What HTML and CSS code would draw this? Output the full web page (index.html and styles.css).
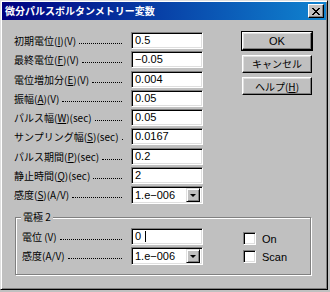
FILE: index.html
```html
<!DOCTYPE html>
<html lang="ja">
<head>
<meta charset="utf-8">
<title>微分パルスボルタンメトリー変数</title>
<link rel="stylesheet" href="styles.css">
</head>
<body>
<div class="window">
	<div class="titlebar">
		<span class="title">微分パルスボルタンメトリー変数</span>
		<span class="close"><svg width="8" height="7" viewBox="0 0 8 7"><path d="M0 0L7 7M1 0L8 7M7 0L0 7M8 0L1 7" stroke="#000" stroke-width="1"/></svg></span>
	</div>
	<div class="main">
		<div class="params">
			<label class="lbl"><span>初期電位(<u>I</u>)(V)</span><span class="dots"></span></label>
			<div class="field">0.5</div>
			<label class="lbl"><span>最終電位(<u>F</u>)(V)</span><span class="dots"></span></label>
			<div class="field">−0.05</div>
			<label class="lbl"><span>電位増加分(<u>E</u>)(V)</span><span class="dots"></span></label>
			<div class="field">0.004</div>
			<label class="lbl"><span>振幅(<u>A</u>)(V)</span><span class="dots"></span></label>
			<div class="field">0.05</div>
			<label class="lbl"><span>パルス幅(<u>W</u>)(sec)</span><span class="dots"></span></label>
			<div class="field">0.05</div>
			<label class="lbl"><span>サンプリング幅(<u>S</u>)(sec)</span><span class="dots"></span></label>
			<div class="field">0.0167</div>
			<label class="lbl"><span>パルス期間(<u>P</u>)(sec)</span><span class="dots"></span></label>
			<div class="field">0.2</div>
			<label class="lbl"><span>静止時間(<u>Q</u>)(sec)</span><span class="dots"></span></label>
			<div class="field">2</div>
			<label class="lbl"><span>感度(<u>S</u>)(A/V)</span><span class="dots"></span></label>
			<div class="combo"><span>1.e−006</span><span class="drop"><i class="arrow"></i></span></div>
		</div>
		<div class="buttons">
			<button class="btn default">OK</button>
			<button class="btn">キャンセル</button>
			<button class="btn">ヘルプ(<u>H</u>)</button>
		</div>
	</div>
	<div class="group">
		<span class="legend">電極 2</span>
		<div class="params small">
			<label class="lbl"><span>電位 (V)</span><span class="dots"></span></label>
			<div class="field">0 <i class="caret"></i></div>
			<label class="lbl"><span>感度(A/V)</span><span class="dots"></span></label>
			<div class="combo"><span>1.e−006</span><span class="drop"><i class="arrow"></i></span></div>
		</div>
		<div class="checks">
			<label class="check"><span class="box"></span>On</label>
			<label class="check"><span class="box"></span>Scan</label>
		</div>
	</div>
</div>
</body>
</html>
```

FILE: styles.css
```css
body { margin: 0; background: #c0c0c0; font-family: "Noto Sans CJK JP", sans-serif; font-size: 10px; color: #000; }

u { text-decoration: underline; text-underline-offset: 1px; }

.window { width: 328px; height: 290px; box-sizing: border-box; background: #c0c0c0; border: 1px solid; border-color: #dfdfdf #000 #000 #dfdfdf; box-shadow: inset 1px 1px #fff, inset -1px -1px #808080; padding: 1px; }

.titlebar { height: 18px; display: flex; align-items: center; justify-content: space-between; padding: 0 2px 0 3px; background: linear-gradient(to right, #000080, #1084d0); }

.title { color: #fff; font-weight: bold; font-size: 10px; line-height: 18px; }

.close { width: 14px; height: 12px; display: flex; align-items: center; justify-content: center; background: #c0c0c0; border: 1px solid; border-color: #fff #000 #000 #fff; box-shadow: inset -1px -1px #808080; }

.main { display: flex; padding: 12px 0 0 12px; }

.params { display: grid; grid-template-columns: 117px 72px; grid-auto-rows: 19.25px; }

.lbl { display: flex; align-items: center; padding-right: 9px; height: 17px; white-space: nowrap; }

.dots { flex: 1; height: 0; border-bottom: 1px dotted #000; margin: 6px 0 0 3px; }

.field, .combo { height: 17px; box-sizing: border-box; background: #fff; border: 1px solid; border-color: #808080 #fff #fff #808080; box-shadow: inset 1px 1px #000, inset -1px -1px #dfdfdf; font-family: "Liberation Sans", sans-serif; font-size: 11px; line-height: 15px; padding: 0 3px; display: flex; align-items: center; }

.combo { height: 18px; justify-content: space-between; padding-right: 2px; }

.drop { width: 14px; height: 14px; box-sizing: border-box; background: #c0c0c0; border: 1px solid; border-color: #dfdfdf #000 #000 #dfdfdf; box-shadow: inset 1px 1px #fff, inset -1px -1px #808080; display: flex; align-items: center; justify-content: center; }

.arrow { width: 0; height: 0; border-left: 3px solid transparent; border-right: 3px solid transparent; border-top: 3px solid #000; margin-top: 1px; }

.caret { display: inline-block; width: 1px; height: 11px; background: #000; margin-left: 4px; }

.buttons { display: flex; flex-direction: column; gap: 4.5px; margin-left: 39px; }

.btn { width: 70px; height: 18px; padding: 0; background: #c0c0c0; border: 1px solid; border-color: #fff #000 #000 #fff; box-shadow: inset -1px -1px #808080, inset 1px 1px #dfdfdf; font-family: "Noto Sans CJK JP", sans-serif; font-size: 10px; color: #000; }

.btn.default { outline: 1px solid #000; font-family: "Liberation Sans", sans-serif; font-size: 11px; }

.group { position: relative; display: flex; width: 296px; height: 58px; box-sizing: border-box; margin: 12px 0 0 13px; padding: 10px 0 0 6px; border: 1px solid #808080; box-shadow: inset 1px 1px #fff, 1px 1px #fff; }

.legend { position: absolute; top: -8px; left: 5px; padding: 0 2px; background: #c0c0c0; line-height: 14px; }

.params.small { grid-template-columns: 109px 72px; grid-auto-rows: 19px; }

.checks { display: flex; flex-direction: column; gap: 5px; margin: 4px 0 0 40px; }

.check { display: flex; align-items: center; gap: 6px; height: 13px; font-family: "Liberation Sans", sans-serif; font-size: 11px; }

.box { width: 13px; height: 13px; box-sizing: border-box; background: #fff; border: 1px solid; border-color: #808080 #fff #fff #808080; box-shadow: inset 1px 1px #000, inset -1px -1px #dfdfdf; }
```
